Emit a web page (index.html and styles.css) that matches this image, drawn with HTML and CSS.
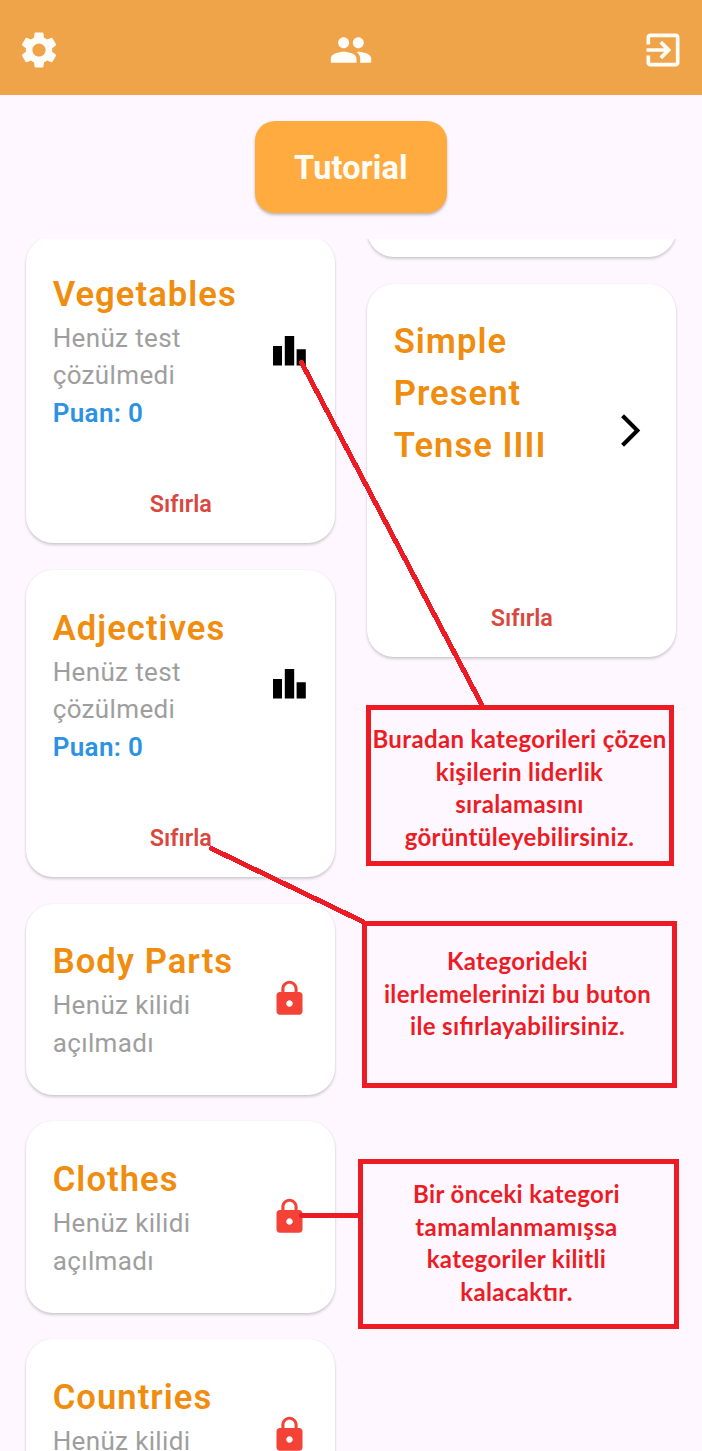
FILE: index.html
```html
<!DOCTYPE html>
<html lang="tr">
<head>
<meta charset="utf-8">
<title>Tutorial</title>
<link rel="stylesheet" href="styles.css">
</head>
<body>
<svg class="sprite" aria-hidden="true">
  <symbol id="lock" viewBox="0 0 24 24"><path d="M18 8h-1V6c0-2.76-2.24-5-5-5S7 3.24 7 6v2H6c-1.1 0-2 .9-2 2v10c0 1.1.9 2 2 2h12c1.1 0 2-.9 2-2V10c0-1.1-.9-2-2-2zm-6 9c-1.1 0-2-.9-2-2s.9-2 2-2 2 .9 2 2-.9 2-2 2zm3.1-9H8.9V6c0-1.71 1.39-3.1 3.1-3.1s3.1 1.39 3.1 3.1v2z"/></symbol>
  <symbol id="bars" viewBox="0 0 39 39"><path d="M3 15h9v19.5H3zM14.8 5h9.4v29.5h-9.4zM26.6 18.2h9.2v16.3h-9.2z"/></symbol>
</svg>
<div class="screen">
  <header class="topbar">
    <svg class="topbar-icon" viewBox="0 0 24 24"><path d="M19.14 12.94c.04-.3.06-.61.06-.94 0-.32-.02-.64-.07-.94l2.03-1.58c.18-.14.23-.41.12-.61l-1.92-3.32c-.12-.22-.37-.29-.59-.22l-2.39.96c-.5-.38-1.03-.7-1.62-.94l-.36-2.54c-.04-.24-.24-.41-.48-.41h-3.84c-.24 0-.43.17-.47.41l-.36 2.54c-.59.24-1.13.57-1.62.94l-2.39-.96c-.22-.08-.47 0-.59.22L2.74 8.87c-.12.21-.08.47.12.61l2.03 1.58c-.05.3-.09.63-.09.94s.02.64.07.94l-2.03 1.58c-.18.14-.23.41-.12.61l1.92 3.32c.12.22.37.29.59.22l2.39-.96c.5.38 1.03.7 1.62.94l.36 2.54c.05.24.24.41.48.41h3.84c.24 0 .44-.17.47-.41l.36-2.54c.59-.24 1.13-.56 1.62-.94l2.39.96c.22.08.47 0 .59-.22l1.92-3.32c.12-.22.07-.47-.12-.61l-2.01-1.58zM12 15.6c-1.98 0-3.6-1.62-3.6-3.6s1.62-3.6 3.6-3.6 3.6 1.62 3.6 3.6-1.62 3.6-3.6 3.6z"/></svg>
    <svg class="topbar-icon" viewBox="0 0 24 24"><path d="M16 11c1.66 0 2.99-1.34 2.99-3S17.66 5 16 5s-3 1.34-3 3 1.34 3 3 3zm-8 0c1.66 0 2.99-1.34 2.99-3S9.66 5 8 5 5 6.34 5 8s1.34 3 3 3zm0 2c-2.33 0-7 1.17-7 3.5V19h14v-2.5c0-2.33-4.67-3.5-7-3.5zm8 0c-.29 0-.62.02-.97.05 1.16.84 1.97 1.97 1.97 3.45V19h6v-2.5c0-2.33-4.67-3.5-7-3.5z"/></svg>
    <svg class="topbar-icon" viewBox="0 0 24 24"><path d="M10.09 15.59L11.5 17l5-5-5-5-1.41 1.41L12.67 11H3v2h9.67l-2.58 2.59zM19 3H5c-1.11 0-2 .9-2 2v4h2V5h14v14H5v-4H3v4c0 1.1.89 2 2 2h14c1.1 0 2-.9 2-2V5c0-1.1-.9-2-2-2z"/></svg>
  </header>

  <div class="actions"><button class="tutorial">Tutorial</button></div>

  <main class="board">
    <div class="column column-left">
      <section class="card">
        <div class="row">
          <div>
            <h2>Vegetables</h2>
            <p>Henüz test<br>çözülmedi</p>
            <p class="score">Puan: 0</p>
          </div>
          <svg class="icon"><use href="#bars"/></svg>
        </div>
        <button class="reset">Sıfırla</button>
      </section>
      <section class="card">
        <div class="row">
          <div>
            <h2>Adjectives</h2>
            <p>Henüz test<br>çözülmedi</p>
            <p class="score">Puan: 0</p>
          </div>
          <svg class="icon"><use href="#bars"/></svg>
        </div>
        <button class="reset">Sıfırla</button>
      </section>
      <section class="card">
        <div class="row">
          <div><h2>Body Parts</h2><p>Henüz kilidi<br>açılmadı</p></div>
          <svg class="icon locked"><use href="#lock"/></svg>
        </div>
      </section>
      <section class="card">
        <div class="row">
          <div><h2>Clothes</h2><p>Henüz kilidi<br>açılmadı</p></div>
          <svg class="icon locked"><use href="#lock"/></svg>
        </div>
      </section>
      <section class="card">
        <div class="row row-locked">
          <div><h2>Countries</h2><p>Henüz kilidi</p></div>
          <svg class="icon locked"><use href="#lock"/></svg>
        </div>
      </section>
    </div>

    <div class="column column-right">
      <section class="card card-scrolled"></section>
      <section class="card">
        <div class="row row-tall">
          <h2>Simple<br>Present<br>Tense IIII</h2>
          <svg class="icon" viewBox="0 0 24 24"><path d="M6.23 20.23L8 22l10-10L8 2 6.23 3.77 14.46 12z"/></svg>
        </div>
        <button class="reset">Sıfırla</button>
      </section>
    </div>
  </main>

  <svg class="pointers" viewBox="0 0 702 1451">
    <path d="M301.5 362.5L483 707M211.5 848.5L362.5 921.5M301.5 1215.5H360"/>
  </svg>
  <aside class="note note-ranking">Buradan kategorileri çözen<br>kişilerin liderlik<br>sıralamasını<br>görüntüleyebilirsiniz.</aside>
  <aside class="note note-reset">Kategorideki<br>ilerlemelerinizi bu buton<br>ile sıfırlayabilirsiniz.</aside>
  <aside class="note note-locked">Bir önceki kategori<br>tamamlanmamışsa<br>kategoriler kilitli<br>kalacaktır.</aside>
</div>
</body>
</html>
```
FILE: styles.css
```css
* { box-sizing: border-box; }
body { margin: 0; background: #fef7ff; font-family: Roboto, sans-serif; }
h2, p { margin: 0; }
button { border: 0; padding: 0; font-family: inherit; }

.sprite { position: absolute; width: 0; height: 0; }

.screen {
  position: relative;
  display: flex;
  flex-direction: column;
  width: 702px;
  height: 1451px;
  overflow: hidden;
}

.topbar {
  display: flex;
  flex: none;
  align-items: center;
  justify-content: space-between;
  height: 95px;
  padding: 4px 17px 0;
  background: #f0a449;
}
.topbar-icon { width: 44px; height: 44px; fill: #fffdf8; }

.actions {
  display: flex;
  flex: none;
  justify-content: center;
  height: 144px;
  padding-top: 26px;
}
.tutorial {
  width: 192px;
  height: 92px;
  padding-top: 1px;
  border-radius: 20px;
  background: #ffab40;
  color: #fffdf8;
  font-size: 32.4px;
  font-weight: 700;
  letter-spacing: 0.2px;
  box-shadow: 0 2px 3px rgba(0, 0, 0, 0.26);
}

.board {
  display: flex;
  flex: 1;
  min-height: 0;
  gap: 32px;
  padding: 0 26px;
  overflow: hidden;
}
.column {
  display: flex;
  flex: 1;
  flex-direction: column;
  gap: 26.4px;
}
.column-left { margin-top: -3px; }

.card {
  display: flex;
  flex: none;
  flex-direction: column;
  padding: 31.9px 26.2px 32.5px 26.7px;
  border-radius: 27px;
  background: #fff;
  box-shadow: 0 2px 3px rgba(0, 0, 0, 0.18), 0 0 2px rgba(0, 0, 0, 0.07);
}
.card:has(.reset) { padding-bottom: 24px; }
.card-scrolled { height: 80px; margin-top: -61.8px; }

.row {
  display: flex;
  align-items: center;
  justify-content: space-between;
}
.row-tall { height: 231px; }
.row-locked { height: 127px; }
.row-tall h2, .row-locked div { align-self: flex-start; }

h2 {
  color: #f08c0e;
  font-size: 34.6px;
  font-weight: 600;
  line-height: 52px;
  letter-spacing: 1.05px;
}
p {
  color: #9e9e9e;
  font-size: 26px;
  line-height: 37.5px;
  letter-spacing: 0.35px;
}
.score { color: #2b92e4; font-weight: 600; }

.icon { flex: none; width: 39px; height: 39px; }
.locked { fill: #f44336; }

.reset {
  align-self: center;
  height: 30px;
  margin-top: 57px;
  background: none;
  color: #d9483f;
  font-size: 23.4px;
  font-weight: 600;
  line-height: 30px;
}

.pointers {
  position: absolute;
  inset: 0;
  width: 702px;
  height: 1451px;
  fill: none;
  stroke: #ed1c24;
  stroke-width: 5;
  stroke-linecap: round;
  shape-rendering: crispEdges;
}

.note {
  position: absolute;
  border: 5px solid #ed1c24;
  color: #ed1c24;
  font: bold 24px/32.6px Lato, sans-serif;
  font-feature-settings: "liga" 1;
  letter-spacing: 0.36px;
  text-align: center;
  white-space: nowrap;
}
.note-ranking { left: 366px; top: 705px; width: 308px; height: 161px; padding: 13px 1px 0 0; }
.note-reset { left: 362px; top: 921px; width: 315px; height: 167px; padding: 19px 4px 0 0; }
.note-locked { left: 358px; top: 1159px; width: 321px; height: 170px; padding: 14px 4px 0 0; }
```
